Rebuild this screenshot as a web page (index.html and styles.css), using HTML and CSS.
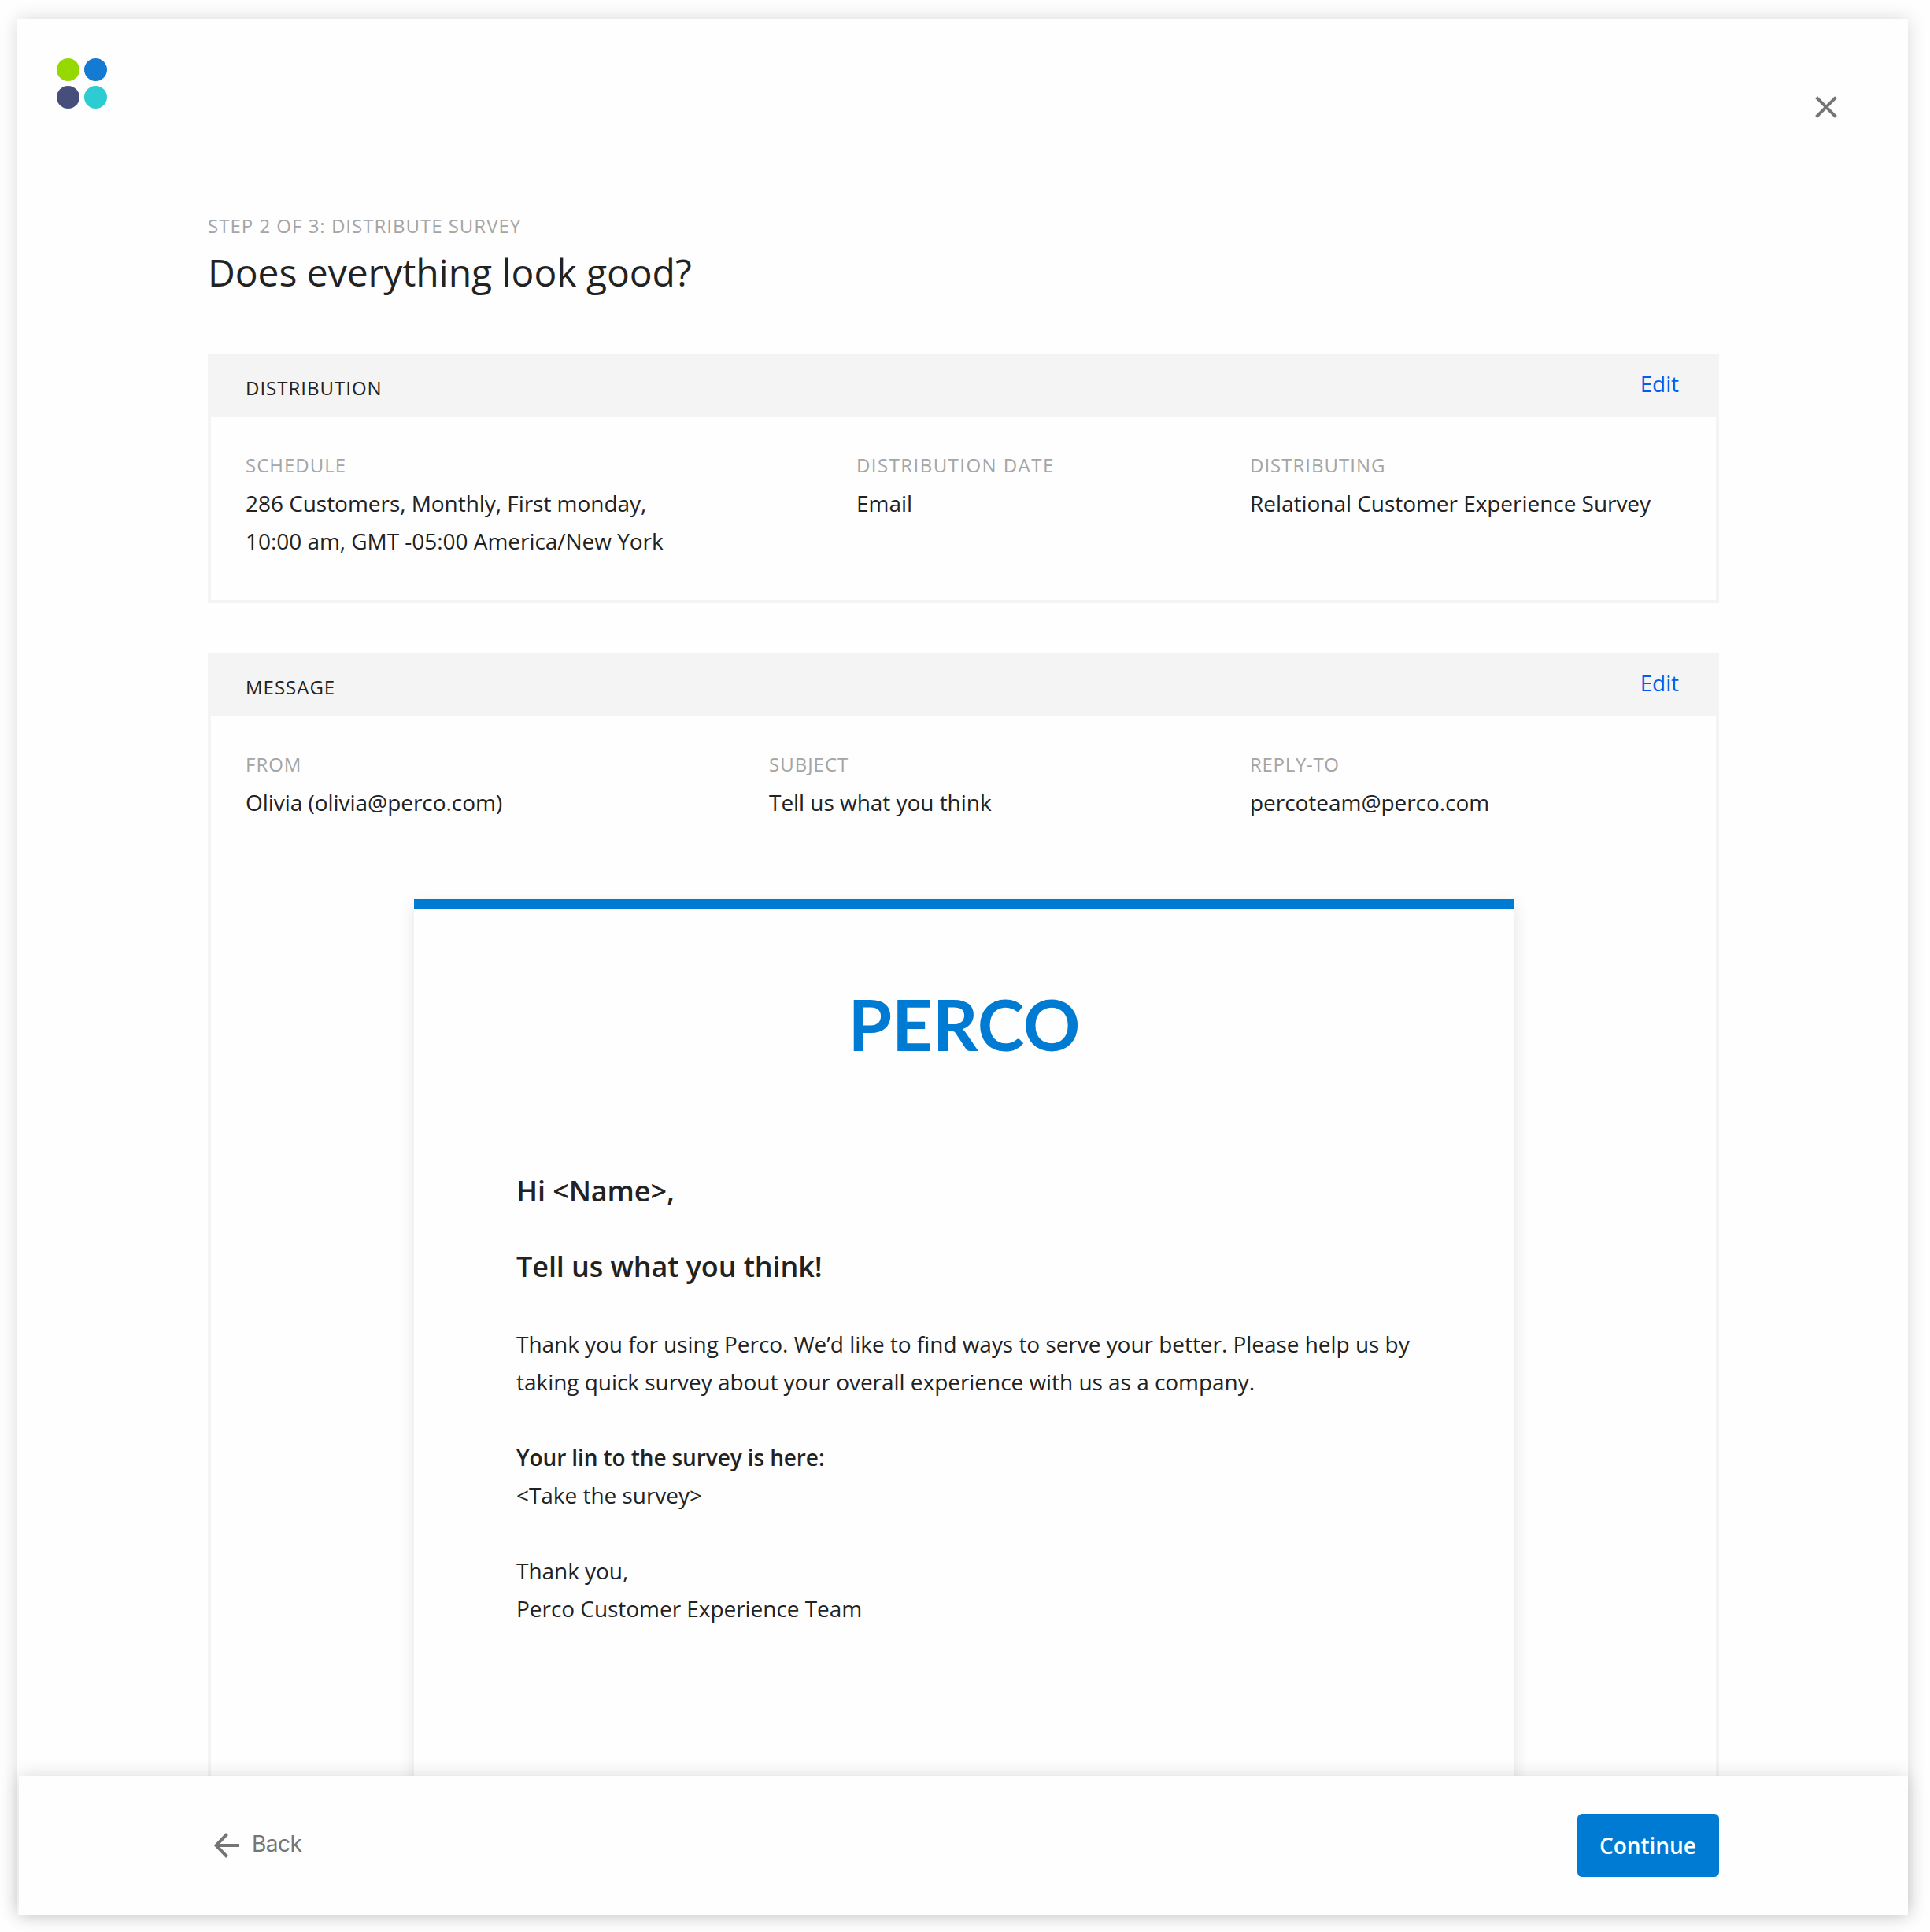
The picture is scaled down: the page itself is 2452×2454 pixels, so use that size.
FILE: index.html
```html
<!DOCTYPE html>
<html lang="en">
<head>
<meta charset="utf-8">
<title>Distribute survey</title>
<link rel="stylesheet" href="styles.css">
</head>
<body>
<div class="window">
  <header class="topbar">
    <svg class="logo" viewBox="0 0 64 64">
      <circle cx="14.5" cy="14.5" r="14.5" fill="#96d900"/>
      <circle cx="49.5" cy="14.5" r="14.5" fill="#157ad2"/>
      <circle cx="14.5" cy="49.5" r="14.5" fill="#464e7b"/>
      <circle cx="49.5" cy="49.5" r="14.5" fill="#2dccd3"/>
    </svg>
    <svg class="close" viewBox="0 0 28 28"><path d="M1.6 1.6L26.4 26.4M26.4 1.6L1.6 26.4"/></svg>
  </header>
  <main class="content">
    <p class="label step">STEP 2 OF 3: DISTRIBUTE SURVEY</p>
    <h1 class="title">Does everything look good?</h1>

    <section class="panel">
      <div class="panel-head"><h2 class="label panel-name">DISTRIBUTION</h2><a class="edit">Edit</a></div>
      <div class="fields fields-distribution">
        <div><p class="label">SCHEDULE</p><p>286 Customers, Monthly, First monday,<br>10:00 am, GMT -05:00 America/New York</p></div>
        <div><p class="label label-wide">DISTRIBUTION DATE</p><p>Email</p></div>
        <div><p class="label">DISTRIBUTING</p><p>Relational Customer Experience Survey</p></div>
      </div>
    </section>

    <section class="panel panel-message">
      <div class="panel-head"><h2 class="label panel-name">MESSAGE</h2><a class="edit">Edit</a></div>
      <div class="fields fields-message">
        <div><p class="label">FROM</p><p>Olivia (olivia@perco.com)</p></div>
        <div><p class="label">SUBJECT</p><p>Tell us what you think</p></div>
        <div><p class="label label-tight">REPLY-TO</p><p>percoteam@perco.com</p></div>
      </div>
      <article class="email">
        <div class="brand">PERCO</div>
        <h3>Hi &lt;Name&gt;,</h3>
        <h3>Tell us what you think!</h3>
        <p>Thank you for using Perco. We’d like to find ways to serve your better. Please help us by<br>taking quick survey about your overall experience with us as a company.</p>
        <p><strong>Your lin to the survey is here:</strong><br>&lt;Take the survey&gt;</p>
        <p>Thank you,<br>Perco Customer Experience Team</p>
      </article>
    </section>
  </main>
  <footer class="footer">
    <a class="back"><svg class="arrow" viewBox="0 0 32 32"><path d="M32 16H3M16.5 1.5L2.5 16L16.5 30.5"/></svg><span class="back-text">Back</span></a>
    <button class="continue">Continue</button>
  </footer>
</div>
</body>
</html>
```
FILE: styles.css
```css
* { box-sizing: border-box; }
body {
  margin: 0;
  padding: 24px 28px 22px 22px;
  height: 2454px;
  background: #fefefe;
  color: #222;
  font: 28px/48px "Open Sans", sans-serif;
  font-feature-settings: "liga";
  letter-spacing: -.04px;
}
p, h1, h2, h3 { margin: 0; font-weight: 400; }
.window {
  display: flex;
  flex-direction: column;
  height: 2408px;
  background: #fefefe;
  box-shadow: 0 0 22px rgba(0, 0, 0, .15);
}
.topbar {
  display: flex;
  justify-content: space-between;
  align-items: flex-start;
  flex: none;
  height: 246px;
  padding: 50px 90px 0 50px;
}
.logo { width: 64px; height: 64px; }
.close {
  width: 28px;
  height: 28px;
  margin-top: 48px;
  fill: none;
  stroke: #757575;
  stroke-width: 4;
}
.content {
  flex: 1;
  min-height: 0;
  padding: 0 240px 0 242px;
  overflow: hidden;
}
.label {
  color: #a5a5a5;
  font-size: 24px;
  line-height: 33px;
  letter-spacing: 1px;
}
.label-wide { letter-spacing: 1.45px; }
.label-tight { letter-spacing: .7px; }
.title {
  margin-top: 10px;
  font-size: 48px;
  line-height: 66px;
}
.panel {
  height: 316px;
  margin-top: 71px;
  border: 4px solid #f4f4f4;
  border-top: 0;
}
.panel-message {
  height: 1600px;
  margin-top: 64px;
}
.panel-head {
  display: flex;
  justify-content: space-between;
  height: 80px;
  padding: 13px 47px 0 44px;
  background: #f4f4f4;
}
.panel-name { margin-top: 13px; color: #222; }
.edit { color: #005eea; letter-spacing: -.1px; }
.fields {
  display: grid;
  padding: 44px 0 0 44px;
}
.fields .label { margin-bottom: 8px; }
.fields-distribution { grid-template-columns: 776px 500px 1fr; }
.fields-message { grid-template-columns: 665px 611px 1fr; }
.email {
  width: 1398px;
  height: 1500px;
  margin: 99px 0 0 258px;
  padding: 86px 130px;
  border-top: 12px solid #007bd3;
  background: #fefefe;
  box-shadow: 0 8px 20px rgba(0, 0, 0, .11);
  white-space: nowrap;
}
.brand {
  margin-bottom: 129px;
  color: #007bd3;
  font: 700 90px/120px Lato, sans-serif;
  text-align: center;
}
.email h3 {
  margin-bottom: 48px;
  font-size: 36px;
  font-weight: 600;
  letter-spacing: -.1px;
}
.email h3 + p { margin-top: 50px; }
.email p { margin-bottom: 48px; }
.email strong { font-weight: 600; letter-spacing: -.1px; }
.footer {
  position: relative;
  display: flex;
  justify-content: space-between;
  align-items: center;
  flex: none;
  height: 176px;
  margin-left: 2px;
  padding: 0 240px 0 248px;
  background: #fefefe;
  box-shadow: 0 0 22px rgba(0, 0, 0, .15);
}
.back {
  display: flex;
  align-items: center;
  gap: 16px;
  color: #757575;
  font-family: Inter, sans-serif;
  letter-spacing: -.5px;
}
.back-text { padding-bottom: 4px; }
.arrow {
  width: 32px;
  height: 32px;
  fill: none;
  stroke: #757575;
  stroke-width: 4;
}
.continue {
  width: 180px;
  height: 80px;
  padding: 0 1px 1px 0;
  border: 0;
  border-radius: 6px;
  background: #007bd3;
  color: #fff;
  font: 600 28px/48px "Open Sans", sans-serif;
  letter-spacing: -.05px;
}
```
